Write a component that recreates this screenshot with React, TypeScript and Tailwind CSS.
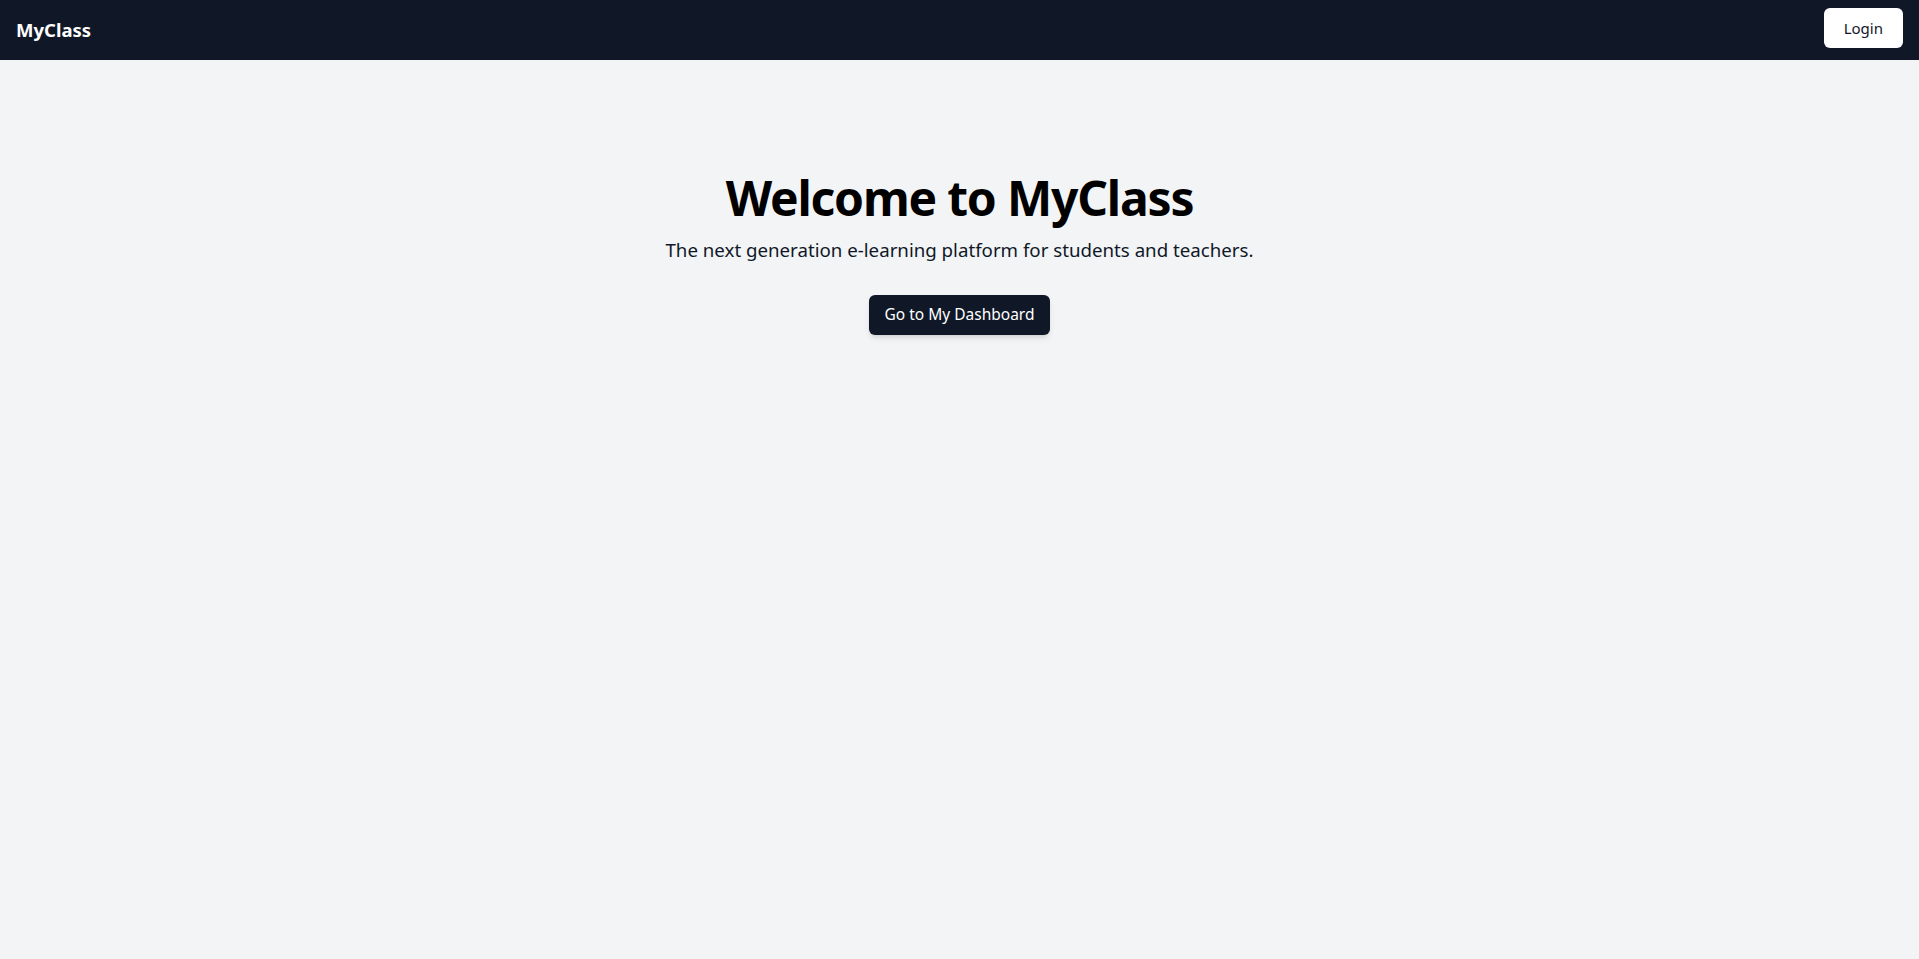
export default function App() {
  return (
    <div className="min-h-screen bg-gray-100" style={{ fontFamily: '"Noto Sans", "Open Sans", sans-serif' }}>
      <header className="h-[60px] bg-gray-900 flex items-center justify-between px-4">
        <div className="text-white font-bold text-[18.5px]">MyClass</div>
        <button className="bg-white text-gray-900 rounded-md px-5 h-10 mb-1 text-[15px]">Login</button>
      </header>
      <main className="flex flex-col items-center pt-[114px]">
        <h1 className="text-[48px] font-bold text-black leading-none tracking-[-1.2px]">Welcome to MyClass</h1>
        <p className="mt-[14px] text-[18.7px] leading-7 text-gray-900">The next generation e-learning platform for students and teachers.</p>
        <button className="mt-[31px] bg-gray-900 text-white rounded-md px-4 h-10 text-[15.5px] shadow-md">Go to My Dashboard</button>
      </main>
    </div>
  );
}
